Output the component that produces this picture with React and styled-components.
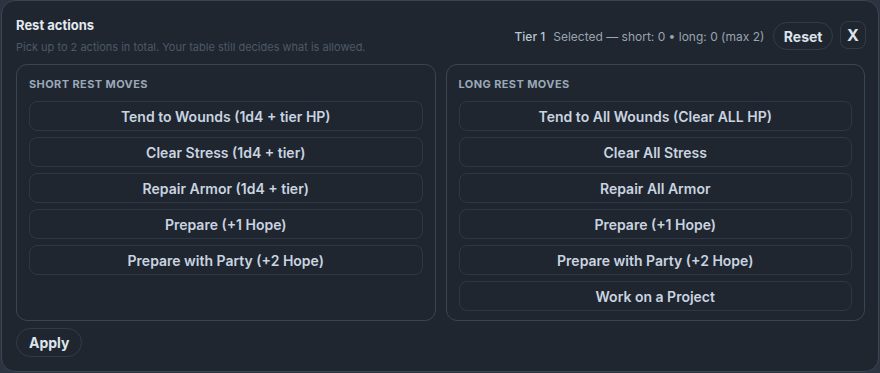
import React from 'react'
import styled, { createGlobalStyle } from 'styled-components'

const Global = createGlobalStyle`
  html, body {
    margin: 0;
    padding: 0;
    background: #2b3440;
  }
  body {
    font-family: Inter, 'Noto Sans', sans-serif;
    -webkit-font-smoothing: antialiased;
  }
  * { box-sizing: border-box; }
`

const Modal = styled.section`
  margin: 0 1px 0 1px;
  height: 372px;
  background: #1f262f;
  border: 1px solid #3a4552;
  border-radius: 14px;
  padding: 14px 13px 14px 14px;
  display: flex;
  flex-direction: column;
`

const Header = styled.header`
  display: flex;
  justify-content: space-between;
  align-items: center;
  height: 40px;
  flex-shrink: 0;
`

const TitleBlock = styled.div`
  display: flex;
  flex-direction: column;
  gap: 7px;
`

const Title = styled.h2`
  margin: 0;
  font-size: 13px;
  font-weight: 700;
  color: #e3e9f0;
  line-height: 16px;
`

const Subtitle = styled.p`
  margin: 0;
  font-size: 11px;
  color: #4d5968;
  line-height: 14px;
`

const Meta = styled.div`
  display: flex;
  align-items: center;
  padding-top: 2px;
  margin-right: -1px;
`

const Tier = styled.span`
  font-size: 12px;
  font-weight: 500;
  color: #b9c6d3;
  margin-right: 8px;
`

const Status = styled.span`
  font-size: 12px;
  color: #98a4b1;
  margin-right: 9px;
`

const PillButton = styled.button`
  font-family: inherit;
  background: transparent;
  border: 1px solid #323c48;
  color: #dde4eb;
  font-size: 14px;
  font-weight: 700;
  height: ${(p) => p.$h || 28}px;
  padding: 0 ${(p) => p.$px || 9.5}px;
  border-radius: 999px;
  cursor: pointer;
`

const CloseButton = styled.button`
  font-family: inherit;
  background: transparent;
  border: 1px solid #323c48;
  color: #dde4eb;
  font-size: 16px;
  font-weight: 700;
  width: 26px;
  height: 28px;
  padding: 0;
  border-radius: 8px;
  margin: -2px 0 0 7px;
  cursor: pointer;
`

const Columns = styled.div`
  display: grid;
  grid-template-columns: 1fr 1fr;
  gap: 10px;
  margin-top: 9px;
  height: 257px;
  flex-shrink: 0;
`

const Panel = styled.div`
  border: 1px solid #3a4552;
  border-radius: 11px;
  padding: 11px 12px 0 12px;
  display: flex;
  flex-direction: column;
`

const PanelTitle = styled.h3`
  margin: 0 0 9px 0;
  font-size: 11px;
  font-weight: 700;
  letter-spacing: 0.4px;
  text-transform: uppercase;
  color: #9aa8b8;
  line-height: 16px;
`

const MoveList = styled.div`
  display: flex;
  flex-direction: column;
  gap: 6px;
`

const MoveButton = styled.button`
  font-family: inherit;
  background: transparent;
  border: 1px solid #2d3844;
  border-radius: 8px;
  height: 30px;
  color: #c9d4e0;
  font-size: 14px;
  font-weight: 600;
  cursor: pointer;
`

const Footer = styled.div`
  margin-top: 7px;
  flex-shrink: 0;
`

const shortMoves = [
  'Tend to Wounds (1d4 + tier HP)',
  'Clear Stress (1d4 + tier)',
  'Repair Armor (1d4 + tier)',
  'Prepare (+1 Hope)',
  'Prepare with Party (+2 Hope)',
]

const longMoves = [
  'Tend to All Wounds (Clear ALL HP)',
  'Clear All Stress',
  'Repair All Armor',
  'Prepare (+1 Hope)',
  'Prepare with Party (+2 Hope)',
  'Work on a Project',
]

const MovePanel = ({ title, moves }) => (
  <Panel>
    <PanelTitle>{title}</PanelTitle>
    <MoveList>
      {moves.map((m) => (
        <MoveButton key={m}>{m}</MoveButton>
      ))}
    </MoveList>
  </Panel>
)

const App = () => (
  <>
    <Global />
    <Modal>
      <Header>
        <TitleBlock>
          <Title>Rest actions</Title>
          <Subtitle>Pick up to 2 actions in total. Your table still decides what is allowed.</Subtitle>
        </TitleBlock>
        <Meta>
          <Tier>Tier 1</Tier>
          <Status>Selected — short: 0 • long: 0 (max 2)</Status>
          <PillButton>Reset</PillButton>
          <CloseButton>X</CloseButton>
        </Meta>
      </Header>
      <Columns>
        <MovePanel title="Short rest moves" moves={shortMoves} />
        <MovePanel title="Long rest moves" moves={longMoves} />
      </Columns>
      <Footer>
        <PillButton $h={29} $px={12}>Apply</PillButton>
      </Footer>
    </Modal>
  </>
)

export default App
